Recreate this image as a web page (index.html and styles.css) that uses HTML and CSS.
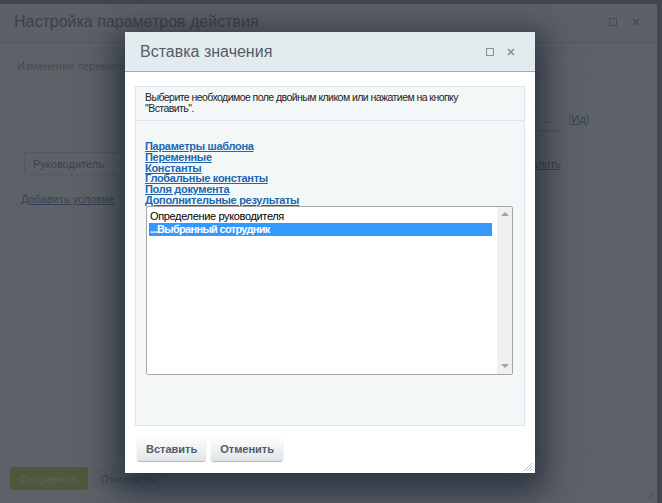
FILE: index.html
```html
<!DOCTYPE html>
<html lang="ru">
<head>
<meta charset="utf-8">
<title>Вставка значения</title>
<link rel="stylesheet" href="styles.css">
</head>
<body>
<div class="page">
  <div class="dlg">
    <div class="dlg-head">
      <span class="dlg-title">Настройка параметров действия</span>
      <span class="dlg-icons">
        <svg class="ico" width="8" height="8" viewBox="0 0 8 8"><rect x="0.5" y="0.5" width="7" height="7" fill="none" stroke="#8a9095" stroke-width="1"/></svg>
        <svg class="ico" width="8" height="8" viewBox="0 0 8 8"><path d="M1 1L7 7M7 1L1 7" stroke="#8a9095" stroke-width="1.6"/></svg>
      </span>
    </div>
    <div class="dlg-body">
      <div class="section">
        <div class="section-head">Изменение переменных</div>
        <div class="section-body">
          <div class="row-id">
            <span class="btn-dots">...</span>
            <span class="id-link">[<a href="#">Ид</a>]</span>
          </div>
          <div class="row-cond">
            <span class="fake-select">Руководитель</span>
            <a class="bg-link" href="#">Удалить</a>
          </div>
          <div class="row-add"><a class="bg-link" href="#">Добавить условие</a></div>
        </div>
      </div>
      <div class="dlg-buttons">
        <span class="bg-btn bg-btn-save">Сохранить</span>
        <span class="bg-btn bg-btn-cancel">Отменить</span>
      </div>
    </div>
    <svg class="grip grip-bg" width="10" height="10" viewBox="0 0 10 10"><path d="M9 1L1 9M9 4L4 9M9 7L7 9" stroke="#9aa0a6" stroke-width="1"/></svg>
  </div>
</div>

<div class="overlay"></div>

<div class="modal">
  <div class="modal-head">
    <span class="modal-title">Вставка значения</span>
    <span class="modal-icons">
      <svg width="8" height="8" viewBox="0 0 8 8"><rect x="0.5" y="0.5" width="7" height="7" fill="none" stroke="#8a9095" stroke-width="1"/></svg>
      <svg width="8" height="8" viewBox="0 0 8 8"><path d="M1 1L7 7M7 1L1 7" stroke="#8a9095" stroke-width="1.6"/></svg>
    </span>
  </div>
  <div class="modal-body">
    <div class="panel">
      <div class="panel-intro"><p class="intro-text">Выберите необходимое поле двойным кликом или нажатием на кнопку "Вставить".</p></div>
      <div class="panel-content">
        <div class="links">
          <a href="#">Параметры шаблона</a>
          <a href="#">Переменные</a>
          <a href="#">Константы</a>
          <a href="#">Глобальные константы</a>
          <a href="#">Поля документа</a>
          <a href="#">Дополнительные результаты</a>
        </div>
        <div class="listbox">
          <div class="listbox-items">
            <div class="opt">Определение руководителя</div>
            <div class="opt selected">...Выбранный сотрудник</div>
          </div>
          <div class="scrollbar">
            <span class="arrow-up"></span>
            <span class="arrow-down"></span>
          </div>
        </div>
      </div>
    </div>
  </div>
  <div class="modal-foot">
    <button class="btn">Вставить</button>
    <button class="btn">Отменить</button>
  </div>
  <svg class="grip grip-modal" width="10" height="10" viewBox="0 0 10 10"><path d="M9 1L1 9M9 4L4 9M9 7L7 9" stroke="#b4b8bc" stroke-width="1"/></svg>
</div>
</body>
</html>
```

FILE: styles.css
```css
* { box-sizing: border-box; }
html, body { margin: 0; height: 100%; }
body {
  background: #75787d;
  font-family: "Liberation Sans", Arial, sans-serif;
  overflow: hidden;
  position: relative;
}

/* background dialog */
.page { padding: 4px 5px 0 0; height: 503px; }
.dlg { background: #fff; height: 100%; display: flex; flex-direction: column; position: relative; }
.dlg-head {
  height: 39px;
  flex: none;
  display: flex;
  align-items: center;
  justify-content: space-between;
  padding: 0 17px 3px 14px;
  background: #f7f9fa;
  border-bottom: 1px solid #d3d8db;
}
.dlg-title { font-size: 16px; color: #535c69; }
.dlg-icons { display: flex; gap: 15px; align-items: center; }
.dlg-body { flex: 1; padding: 9px 7px 0 10px; display: flex; flex-direction: column; }
.section { height: 403px; flex: none; border: 1px solid #e3e8eb; background: #fff; }
.section-head {
  height: 27px;
  line-height: 27px;
  padding: 0 6px;
  font-size: 11px;
  color: #8a9098;
  border-bottom: 1px solid #e3e8eb;
}
.section-body { padding-top: 28px; }
.row-id { display: flex; justify-content: flex-end; align-items: center; gap: 6px; padding-right: 60px; height: 22px; }
.btn-dots {
  width: 28px; height: 22px;
  display: flex; align-items: center; justify-content: center;
  font-size: 11px; color: #555;
  background: #fff; border-radius: 3px;
  box-shadow: 0 1px 2px rgba(0,0,0,.35);
}
.id-link { font-size: 11px; color: #8b9096; }
.id-link a { color: #2067b0; }
.row-cond { display: flex; justify-content: space-between; align-items: center; margin-top: 22px; padding: 0 88px 0 13px; }
.fake-select {
  width: 340px; height: 23px;
  display: flex; align-items: center;
  padding-left: 8px;
  border: 1px solid #c5ccd2; border-radius: 3px;
  font-size: 11px; color: #555;
}
.bg-link { font-size: 11px; color: #2a5f9a; }
.row-add { margin-top: 14px; padding-left: 10px; }
.dlg-buttons { display: flex; gap: 5px; margin-top: 12px; }
.bg-btn {
  height: 23px; display: flex; align-items: center; justify-content: center;
  font-size: 11px; font-weight: bold; border-radius: 3px;
}
.bg-btn-save { width: 78px; background: #a9d41e; color: #dfeec0; }
.bg-btn-cancel { width: 69px; background: #e9edef; color: #8a9098; }
.grip { position: absolute; right: 2px; bottom: 2px; }
.grip-bg { right: 2px; bottom: 3px; }

/* dim layer */
.overlay { position: absolute; inset: 0; background: rgba(55, 58, 66, 0.8); }

/* modal */
.modal {
  position: absolute;
  left: 125px; top: 32px;
  width: 410px; height: 441px;
  background: #fff;
  box-shadow: 0 10px 30px 10px rgba(22, 36, 50, 0.72);
  display: flex; flex-direction: column;
}
.modal-head {
  height: 40px; flex: none;
  background: #e4ebee;
  border-bottom: 1px solid #a7abaf;
  display: flex; align-items: center; justify-content: space-between;
  padding: 0 20px 0 15px;
}
.modal-title { font-size: 16px; color: #535c69; }
.modal-icons { display: flex; gap: 13px; align-items: center; }
.modal-body { padding: 14px 10px 0; flex: none; }
.panel { height: 340px; background: #f4f7f8; border: 1px solid #dce6eb; }
.panel-intro {
  padding: 5px 9px;
  height: 34px;
  border-bottom: 1px solid #dce6eb;
}
.intro-text {
  margin: 0;
  max-width: 320px;
  font-size: 10.5px; line-height: 11px;
  letter-spacing: -0.55px;
  color: #222;
}
.panel-content { padding: 20px 10px 0 9px; }
.links a {
  display: block;
  font-size: 11px; line-height: 10.8px; font-weight: bold;
  letter-spacing: -0.3px;
  color: #2067b0;
}
.listbox {
  display: flex;
  margin-left: 1px;
  width: 367px; height: 169px;
  border: 1px solid #a6a6a6; border-radius: 2px;
  background: #fff;
}
.listbox-items { flex: 1; padding: 3px 5px 0 2px; font-size: 11px; letter-spacing: -0.35px; color: #000; }
.opt { height: 13px; line-height: 13px; padding-left: 1px; white-space: nowrap; }
.opt.selected { background: #3399ff; color: #fff; font-weight: bold; letter-spacing: -0.7px; }
.scrollbar {
  width: 15px; background: #f0f0f0;
  display: flex; flex-direction: column; justify-content: space-between; align-items: center;
  padding: 5px 0 6px;
}
.arrow-up { width: 0; height: 0; border-left: 4px solid transparent; border-right: 4px solid transparent; border-bottom: 4px solid #a3a3a3; }
.arrow-down { width: 0; height: 0; border-left: 4px solid transparent; border-right: 4px solid transparent; border-top: 4px solid #a3a3a3; }
.modal-foot { display: flex; gap: 5px; padding: 11px 12px 0; }
.btn {
  height: 24px; padding: 0 9px;
  border: none; border-radius: 3px;
  background: linear-gradient(#fdfefe, #dfe5e8);
  box-shadow: 0 1px 1px rgba(0,0,0,.3);
  font: bold 11px "Liberation Sans", Arial, sans-serif;
  color: #535c69;
}
.grip-modal { right: 2px; bottom: 1px; }
```
